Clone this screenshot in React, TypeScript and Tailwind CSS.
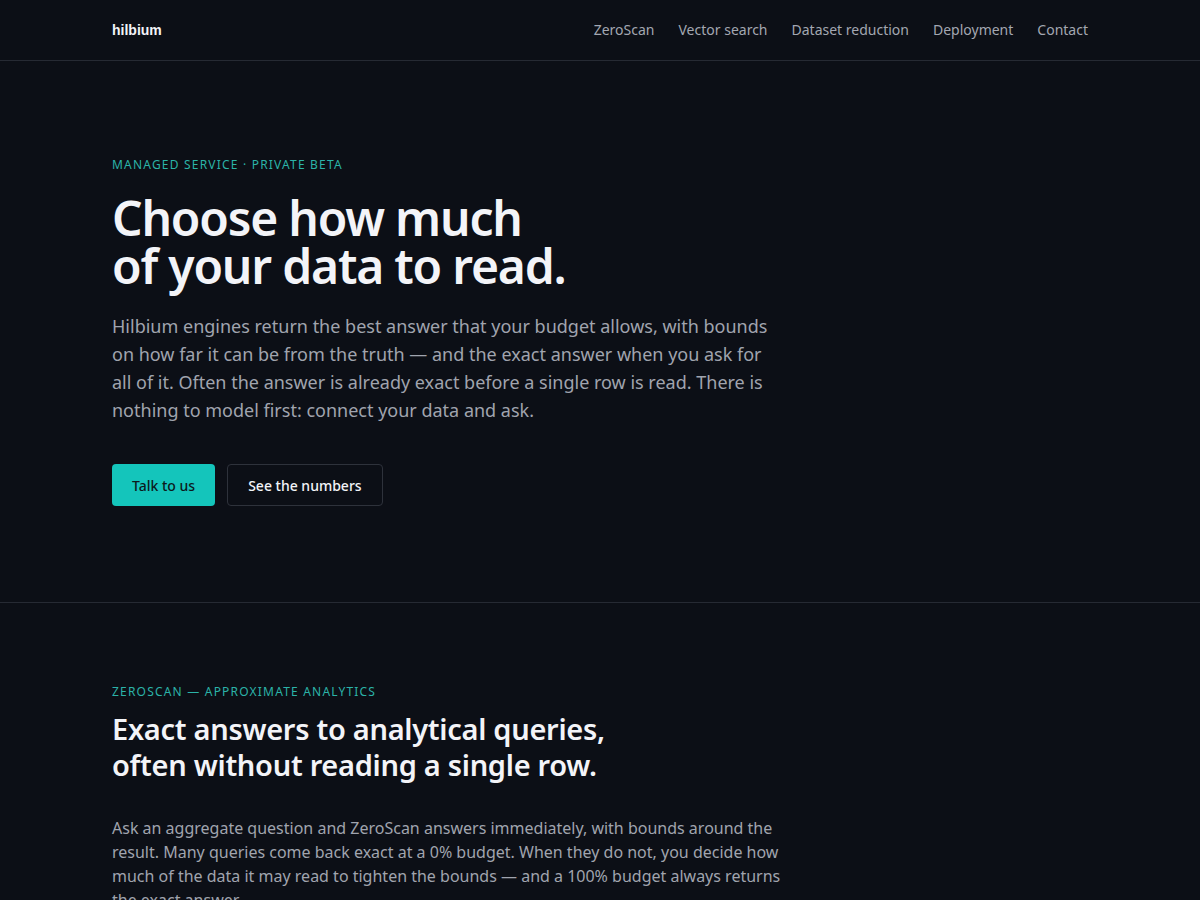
import React from "react";

export default function App() {
  const nav = ["ZeroScan", "Vector search", "Dataset reduction", "Deployment", "Contact"];
  return (
    <div className="min-h-screen bg-[#0c0f16] text-[#f3f4f8]" style={{ fontFamily: '"Noto Sans", sans-serif' }}>
      <header className="border-b border-[#262a33]">
        <div className="mx-auto flex h-[60px] max-w-[976px] items-center justify-between">
          <div className="text-[14px] font-bold text-[#f3f4f8]" style={{ fontFamily: '"Liberation Sans", Arial, sans-serif' }}>hilbium</div>
          <nav className="flex items-center gap-[24px] pb-[2px] text-[14px] text-[#a3a7b1]">
            {nav.map((n) => (
              <a key={n} href="#">{n}</a>
            ))}
          </nav>
        </div>
      </header>

      <section className="border-b border-[#262a33]">
        <div className="mx-auto max-w-[976px] pt-[95px] pb-[96px]">
          <div className="text-[12px] tracking-[0.1em] text-[#2bb3a8]">MANAGED SERVICE · PRIVATE BETA</div>
          <h1 className="mt-[20px] text-[48px] font-semibold leading-[48px] tracking-[-0.025em] text-[#f3f4f8]">
            Choose how much
            <br />
            of your data to read.
          </h1>
          <p className="mt-[22px] max-w-[670px] text-[18px] leading-[28px] text-[#a0a4ae]">
            Hilbium engines return the best answer that your budget allows, with bounds on how far it can be from the truth — and the exact answer when you ask for all of it. Often the answer is already exact before a single row is read. There is nothing to model first: connect your data and ask.
          </p>
          <div className="mt-[40px] flex gap-3">
            <a href="#" className="flex h-[42px] items-center rounded-[4px] bg-[#14c5bb] px-5 text-[14px] font-medium text-[#0c1a1c]">Talk to us</a>
            <a href="#" className="flex h-[42px] items-center rounded-[4px] border border-[#2e323b] px-[20px] text-[14px] font-medium text-[#f3f4f8]">See the numbers</a>
          </div>
        </div>
      </section>

      <section>
        <div className="mx-auto max-w-[976px] pt-[80px] pb-[80px]">
          <div className="text-[12px] tracking-[0.1em] text-[#2bb3a8]">ZEROSCAN — APPROXIMATE ANALYTICS</div>
          <h2 className="mt-[10px] text-[29px] font-semibold leading-[36px] tracking-[-0.01em] text-[#f3f4f8]">
            Exact answers to analytical queries,
            <br />
            often without reading a single row.
          </h2>
          <p className="mt-[33px] max-w-[680px] text-[16px] leading-[24px] text-[#a0a4ae]">
            Ask an aggregate question and ZeroScan answers immediately, with bounds around the result. Many queries come back exact at a 0% budget. When they do not, you decide how much of the data it may read to tighten the bounds — and a 100% budget always returns the exact answer.
          </p>
        </div>
      </section>
    </div>
  );
}
